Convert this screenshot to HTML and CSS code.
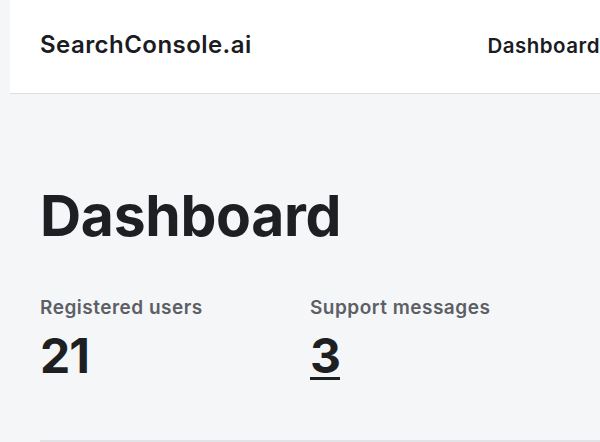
FILE: index.html
```html
<!DOCTYPE html>
<html lang="en">
<head>
<meta charset="utf-8">
<title>Dashboard – SearchConsole.ai</title>
<link rel="stylesheet" href="styles.css">
</head>
<body>
<div class="page">
  <header class="topbar">
    <div class="brand">SearchConsole.ai</div>
    <nav class="nav"><a class="nav-link" href="#">Dashboard</a></nav>
  </header>
  <main class="content">
    <h1 class="title">Dashboard</h1>
    <section class="stats">
      <div class="stat">
        <div class="stat-label">Registered users</div>
        <div class="stat-value">21</div>
      </div>
      <div class="stat">
        <div class="stat-label">Support messages</div>
        <a class="stat-value stat-link" href="#">3</a>
      </div>
    </section>
    <hr class="divider">
  </main>
</div>
</body>
</html>
```

FILE: styles.css
```css
html, body {
  margin: 0;
  padding: 0;
  overflow: hidden;
}
body {
  background: #f5f6f8;
  font-family: Inter, "Noto Sans", "Liberation Sans", sans-serif;
  color: #1e1f23;
}
.page {
  width: 630px;
}
.topbar {
  margin-left: 10px;
  height: 94px;
  box-sizing: border-box;
  background: #ffffff;
  border-bottom: 1px solid #dedfe1;
  display: flex;
  align-items: baseline;
  justify-content: space-between;
  padding: 31px 30px 0 30px;
}
.brand {
  font-size: 24px;
  line-height: 1.15;
  font-weight: 600;
  letter-spacing: 0.45px;
  color: #1b1c1f;
}
.nav-link {
  font-size: 20.5px;
  line-height: 1.2;
  font-weight: 600;
  letter-spacing: 0.5px;
  color: #1b1c1f;
  text-decoration: none;
}
.content {
  padding: 0 0 0 40px;
}
.title {
  margin: 93px 0 0 0;
  font-size: 57px;
  line-height: 1;
  font-weight: 700;
  letter-spacing: -0.3px;
  color: #1e1f23;
}
.stats {
  display: grid;
  grid-template-columns: 270px 270px;
  margin-top: 53px;
}
.stat {
  display: flex;
  flex-direction: column;
  align-items: flex-start;
}
.stat-label {
  font-size: 19px;
  line-height: 1.2;
  font-weight: 600;
  letter-spacing: 0.5px;
  color: #5c5f65;
}
.stat-value {
  margin-top: 12px;
  font-size: 48px;
  line-height: 1;
  font-weight: 700;
  color: #1e1f23;
  letter-spacing: -1px;
}
.stat-link {
  text-decoration: underline;
  text-decoration-thickness: 3px;
  text-underline-offset: 4px;
}
.divider {
  margin: 60px 0 0 0;
  border: 0;
  border-top: 2px solid #e2e3e6;
  height: 0;
}
```
